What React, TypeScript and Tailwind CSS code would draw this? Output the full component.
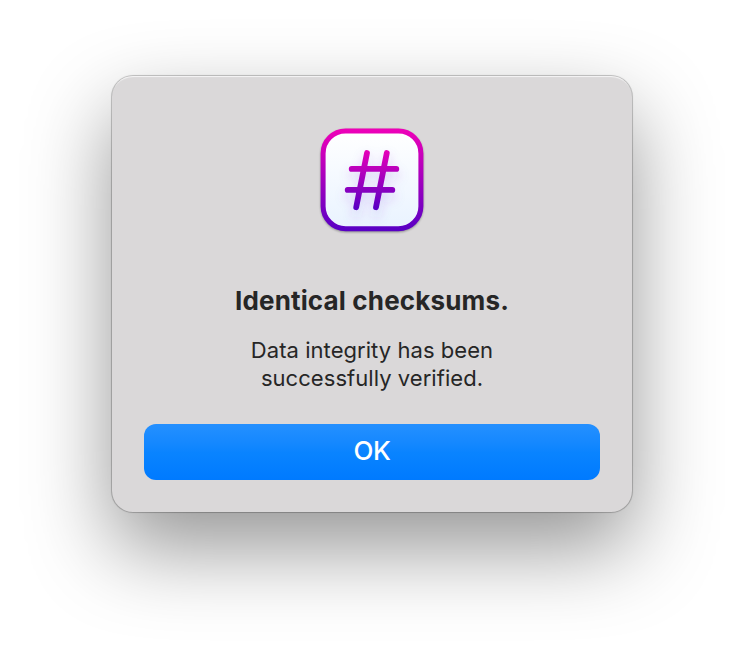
function HashIcon() {
  return (
    <svg width="124" height="124" viewBox="0 0 124 124" fill="none" aria-hidden="true">
      <defs>
        <linearGradient id="frame" gradientUnits="userSpaceOnUse" x1="0" y1="10" x2="0" y2="113">
          <stop offset="0" stopColor="#f000b8" />
          <stop offset="1" stopColor="#5800c4" />
        </linearGradient>
        <linearGradient id="hash" gradientUnits="userSpaceOnUse" x1="0" y1="31" x2="0" y2="93">
          <stop offset="0" stopColor="#ea00b8" />
          <stop offset="1" stopColor="#5500c4" />
        </linearGradient>
        <linearGradient id="paper" x1="0" y1="0" x2="0" y2="1">
          <stop offset="0" stopColor="#ffffff" />
          <stop offset="1" stopColor="#e9f3ff" />
        </linearGradient>
        <filter id="blur" x="-30%" y="-30%" width="160%" height="160%">
          <feGaussianBlur stdDeviation="5.5" />
        </filter>
        <filter id="softBlur" x="-10%" y="-10%" width="120%" height="120%">
          <feGaussianBlur stdDeviation="1.2" />
        </filter>
      </defs>
      <rect x="10.7" y="11.6" width="102.6" height="102.6" rx="25" fill="#000" opacity="0.35" filter="url(#softBlur)" />
      <rect x="13.1" y="12.9" width="97.8" height="97.8" rx="22.5" fill="url(#paper)" stroke="url(#frame)" strokeWidth="5" />
      <path d="M57 40 46 97M77 40 66 97M41.5 57h45M37.5 78h45" stroke="#7a30d0" strokeOpacity="0.2" strokeWidth="6" strokeLinecap="round" filter="url(#blur)" />
      <path d="M57 35 46.2 89.2M76.8 35 66 89.2M41.7 50.9h44.6M37.7 71.9h44.6" stroke="url(#hash)" strokeWidth="5.8" strokeLinecap="round" />
    </svg>
  );
}

export default function App() {
  return (
    <main className="flex h-[660px] w-[744px] items-start justify-center overflow-hidden bg-white pt-[76px] font-['Inter','Liberation_Sans',sans-serif] text-[#262626]">
      <section
        role="alertdialog"
        className="flex h-[436px] w-[520px] flex-col items-center rounded-[21px] bg-[#dad8d9] px-8 pt-[42px] shadow-[inset_0_2px_1px_-1px_rgba(255,255,255,0.75),0_0_0_1px_rgba(0,0,0,0.15),0_0_2px_rgba(0,0,0,0.25),0_36px_84px_rgba(0,0,0,0.42)]"
      >
        <HashIcon />
        <h1 className="mt-[43px] text-[26px] leading-8 font-bold tracking-[0.16px] whitespace-nowrap">
          Identical checksums.
        </h1>
        <p className="mt-[19px] text-center text-[22px] leading-7 tracking-[0.05px] whitespace-nowrap">
          Data integrity has been
          <br />
          successfully verified.
        </p>
        <button className="mt-8 flex h-14 w-full shrink-0 items-center justify-center rounded-xl bg-linear-to-b from-[#2490ff] via-[#0a84ff] to-[#007aff] pb-1 text-[26px] font-medium tracking-[-0.5px] text-white">
          OK
        </button>
      </section>
    </main>
  );
}
